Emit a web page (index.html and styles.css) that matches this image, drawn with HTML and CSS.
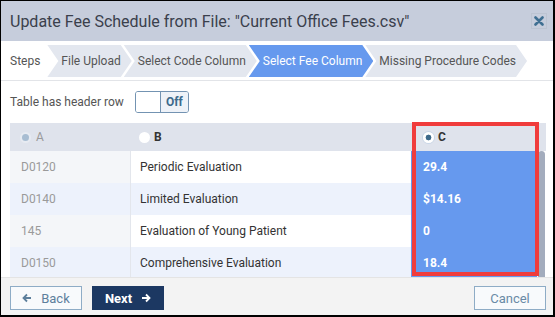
FILE: index.html
```html
<!DOCTYPE html>
<html lang="en">
<head>
  <meta charset="UTF-8" />
  <title>Update Fee Schedule</title>
  <link rel="stylesheet" href="styles.css">
</head>
<body>

  <div class="dialog">

    <!-- Title bar -->
    <header class="dlg-head">
      <h1>Update Fee Schedule from File: "Current Office Fees.csv"</h1>
      <button class="close" aria-label="Close">
        <svg width="10" height="10" viewBox="0 0 10 10"><path d="M1.5 1.5 L8.5 8.5 M8.5 1.5 L1.5 8.5" stroke="#3f6f92" stroke-width="2.6" stroke-linecap="round"/></svg>
      </button>
    </header>

    <!-- Wizard steps -->
    <nav class="steps">
      <span class="steps-label">Steps</span>
      <ol>
        <li>File Upload</li>
        <li>Select Code Column</li>
        <li class="active">Select Fee Column</li>
        <li>Missing Procedure Codes</li>
      </ol>
    </nav>

    <div class="dlg-body">
      <div class="toggle-row">
        <span>Table has header row</span>
        <div class="toggle">
          <span class="knob"></span>
          <span class="state">Off</span>
        </div>
      </div>

      <div class="grid">
        <div class="grid-head">
          <div class="cell col-a"><span class="radio disabled"></span>A</div>
          <div class="cell col-b"><span class="radio"></span>B</div>
          <div class="cell col-c"><span class="radio checked"></span>C</div>
        </div>
        <div class="grid-body">
          <div class="rows">
            <div class="row">
              <div class="cell col-a">D0120</div>
              <div class="cell col-b">Periodic Evaluation</div>
              <div class="cell col-c">29.4</div>
            </div>
            <div class="row">
              <div class="cell col-a">D0140</div>
              <div class="cell col-b">Limited Evaluation</div>
              <div class="cell col-c">$14.16</div>
            </div>
            <div class="row">
              <div class="cell col-a">145</div>
              <div class="cell col-b">Evaluation of Young Patient</div>
              <div class="cell col-c">0</div>
            </div>
            <div class="row">
              <div class="cell col-a">D0150</div>
              <div class="cell col-b">Comprehensive Evaluation</div>
              <div class="cell col-c">18.4</div>
            </div>
          </div>
          <div class="scrollbar"><div class="thumb"></div></div>
        </div>
      </div>
    </div>

    <footer class="dlg-foot">
      <button class="btn">
        <svg width="10" height="10" viewBox="0 0 10 10"><path d="M9 5 H2 M5 1.5 L1.5 5 L5 8.5" fill="none" stroke="currentColor" stroke-width="1.8"/></svg>
        Back
      </button>
      <button class="btn primary">
        Next
        <svg width="10" height="10" viewBox="0 0 10 10"><path d="M1 5 H8 M5 1.5 L8.5 5 L5 8.5" fill="none" stroke="currentColor" stroke-width="1.8"/></svg>
      </button>
      <button class="btn cancel">Cancel</button>
    </footer>

    <!-- annotation box over the selected column -->
    <div class="highlight"></div>
  </div>

</body>
</html>
```

FILE: styles.css
```css
* {
  box-sizing: border-box;
}
body {
  margin: 0;
  font-family: Roboto, "Liberation Sans", sans-serif;
  background: #fff;
}
.dialog {
  position: relative;
  width: 555px;
  height: 317px;
  border: 1px solid #000;
  border-right-width: 2px;
  border-bottom-width: 2px;
  display: flex;
  flex-direction: column;
  background: #fff;
}
.dlg-head {
  height: 40px;
  background: #c6cddc;
  display: flex;
  align-items: center;
  justify-content: space-between;
  padding: 0 6px 0 9px;
}
.dlg-head h1 {
  margin: 0;
  font-size: 16px;
  font-weight: 400;
  color: #3a404c;
}
.close {
  width: 16px;
  height: 16px;
  border: 1px solid #bcc4d2;
  background: transparent;
  padding: 0;
  display: flex;
  align-items: center;
  justify-content: center;
}
.steps {
  display: flex;
  align-items: center;
  padding: 4px 9px 3px;
  border-bottom: 1px solid #e2e4e8;
  font-size: 12px;
}
.steps-label {
  color: #555;
  margin-right: 7px;
}
.steps ol {
  display: flex;
  list-style: none;
  margin: 0;
  padding: 0;
}
.steps li {
  height: 32px;
  line-height: 32px;
  background: #e3e7ef;
  color: #555;
  padding: 0 11px 0 14px;
  margin-left: -8px;
  clip-path: polygon(0 0, calc(100% - 11px) 0, 100% 50%, calc(100% - 11px) 100%, 0 100%, 11px 50%);
}
.steps li:first-child {
  margin-left: 0;
}
.steps li.active {
  background: #6699ee;
  color: #fff;
}
.dlg-body {
  padding: 0 9px;
}
.toggle-row {
  display: flex;
  align-items: center;
  gap: 11px;
  padding: 10px 0;
  font-size: 12px;
  color: #555;
}
.toggle {
  display: flex;
  height: 22px;
  border: 1px solid #7393b2;
  border-radius: 3px;
  overflow: hidden;
}
.knob {
  width: 25px;
  background: #fff;
  border-right: 1px solid #7393b2;
}
.state {
  width: 27px;
  background: #eef2f8;
  color: #3d6a8c;
  font-weight: 700;
  font-size: 12px;
  text-align: center;
  line-height: 20px;
}
.grid {
  font-size: 12px;
  width: 536px;
}
.grid-head {
  display: flex;
  height: 28px;
  background: #dfe3ec;
}
.cell {
  display: flex;
  align-items: center;
  gap: 4px;
}
.col-a {
  width: 120px;
  padding-left: 11px;
  color: #9a9a9a;
}
.col-b {
  width: 281px;
  padding-left: 9px;
  color: #333;
}
.col-c {
  width: 126px;
  padding-left: 12px;
  color: #333;
}
.grid-head .col-b,
.grid-head .col-c {
  font-weight: 700;
}
.grid-head .col-a {
  padding-left: 12px;
}
.radio {
  width: 11px;
  height: 11px;
  border-radius: 50%;
  background: #fff;
}
.radio.disabled {
  width: 7px;
  height: 7px;
  background: #a8bdd2;
  box-shadow: 0 0 0 2px #e7ebf2;
  margin-right: 3px;
}
.radio.checked {
  box-shadow: 0 0 0 1px #c9d6e6;
  background: radial-gradient(circle, #3e6a8a 0 2.6px, #fff 3.2px);
}
.grid-body {
  display: flex;
  height: 126px;
  overflow: hidden;
}
.row {
  display: flex;
  height: 32px;
}
.row .col-a {
  background: #f4f6f9;
}
.row .col-b {
  border-left: 1px solid #e3e6ec;
}
.row:nth-child(even) .col-a,
.row:nth-child(even) .col-b {
  background: #edf2fc;
}
.row .col-c {
  background: #6699ee;
  color: #fff;
  font-weight: 700;
}
.scrollbar {
  width: 8px;
  padding-left: 1px;
}
.thumb {
  height: 100%;
  background: #a3acbd;
  border-radius: 4px 4px 0 0;
}
.dlg-foot {
  flex: 1;
  display: flex;
  align-items: flex-start;
  gap: 10px;
  padding: 8px 7px 0 9px;
  background: #f3f3f3;
  border-top: 1px solid #e4e4e4;
}
.btn {
  height: 24px;
  width: 72px;
  font-family: inherit;
  font-size: 13px;
  border: 1px solid #8eacc6;
  background: #f8fafc;
  color: #5d7f9c;
  display: flex;
  align-items: center;
  justify-content: center;
  gap: 9px;
  padding: 0;
}
.btn.primary {
  background: #1c3862;
  border-color: #1c3862;
  color: #fff;
  font-weight: 700;
}
.btn.cancel {
  margin-left: auto;
  color: #6a8aa6;
}
.highlight {
  position: absolute;
  left: 411px;
  top: 121px;
  width: 127px;
  height: 154px;
  border: 4px solid #f03c3c;
}
```
